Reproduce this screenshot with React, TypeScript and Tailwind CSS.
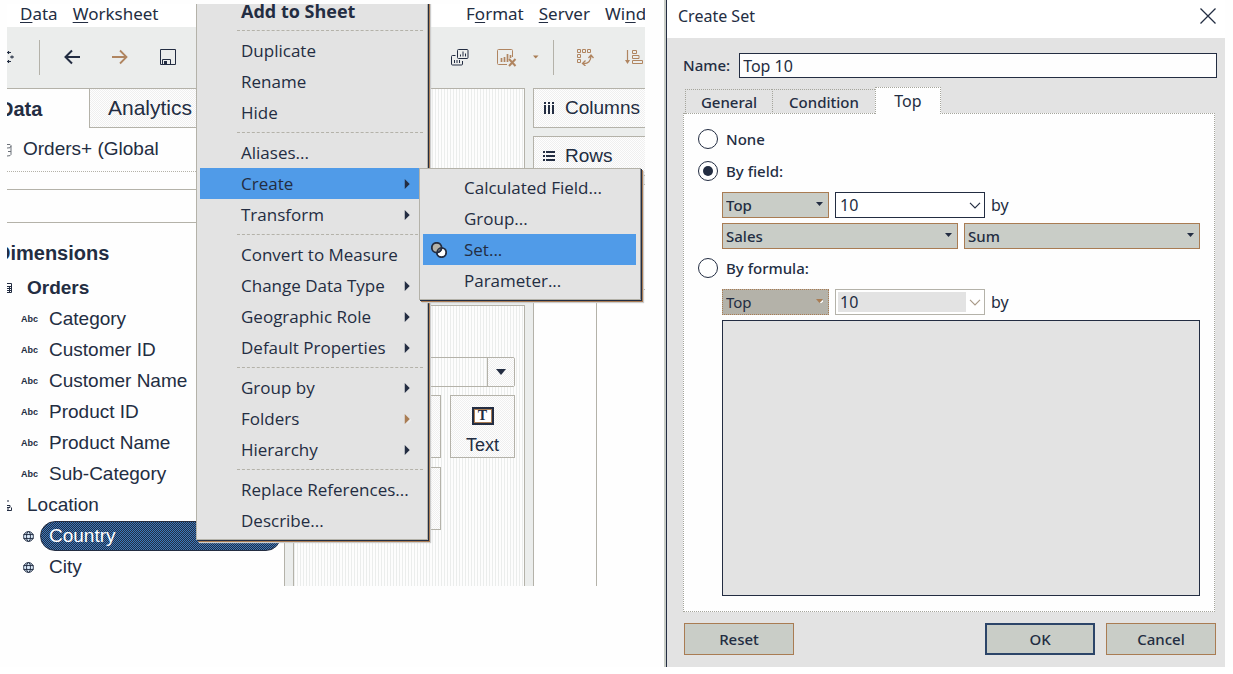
import React from "react";

const stripes =
  "bg-[repeating-linear-gradient(90deg,#ebedec_0_1px,#fdfdfd_1px_3px)]";
const checker =
  "bg-[repeating-conic-gradient(#efefef_0_25%,#fefefe_0_50%)] bg-[length:2px_2px]";

type Entry = { label: string; sub?: boolean; bold?: boolean; dim?: boolean; active?: boolean };

const menuGroups: Entry[][] = [
  [{ label: "Add to Sheet", bold: true }],
  [{ label: "Duplicate" }, { label: "Rename" }, { label: "Hide" }],
  [{ label: "Aliases..." }, { label: "Create", sub: true, active: true }, { label: "Transform", sub: true }],
  [
    { label: "Convert to Measure" },
    { label: "Change Data Type", sub: true },
    { label: "Geographic Role", sub: true },
    { label: "Default Properties", sub: true },
  ],
  [{ label: "Group by", sub: true }, { label: "Folders", sub: true, dim: true }, { label: "Hierarchy", sub: true }],
  [{ label: "Replace References..." }, { label: "Describe..." }],
];

const createItems: Entry[] = [
  { label: "Calculated Field..." },
  { label: "Group..." },
  { label: "Set...", active: true },
  { label: "Parameter..." },
];

const fields = ["Category", "Customer ID", "Customer Name", "Product ID", "Product Name", "Sub-Category"];

function SetIcon() {
  return (
    <svg className="h-4 w-4" viewBox="0 0 16 16" fill="none" stroke="#232d42" strokeWidth="1.8">
      <circle cx="10.5" cy="10.5" r="4.7" fill="#fff" />
      <circle cx="5.7" cy="5.7" r="4.9" fill="#b4b2a9" />
      <path d="M6 10.4a4.7 4.7 0 0 1 4.5-4.6a4.9 4.9 0 0 1-4.5 4.6z" fill="#6c6e72" strokeWidth="1.4" />
    </svg>
  );
}

function MenuRow({ item, children }: { item: Entry; children?: React.ReactNode }) {
  return (
    <li role="none" className="relative">
      <button
        type="button"
        role="menuitem"
        className={`flex h-[31px] w-full items-center justify-between pr-3 pl-[41px] text-left whitespace-nowrap ${
          item.active ? "bg-[#509be8]" : ""
        } ${item.bold ? "text-lg font-bold" : ""}`}
      >
        <span>{item.label}</span>
        {item.sub && (
          <svg className="h-[10px] w-[7px]" viewBox="0 0 6 9">
            {item.dim && <path d="M2 9.5L6 5.5V4.5L3 8z" fill="#fff" />}
            <path d="M0.5 0L5 4.5L0.5 9z" fill={item.dim ? "#a97c53" : "#232d42"} />
          </svg>
        )}
      </button>
      {children}
    </li>
  );
}

function CreateSubmenu() {
  return (
    <ul
      role="menu"
      aria-label="Create"
      className="absolute top-0 left-[219px] z-10 w-[222px] border border-[#b4b2a9] border-r-[#8d8d8d] bg-[#e3e3e3] py-[3px] pr-[4px] pl-[3px] shadow-[1px_1px_0_0_#232d42,2px_2px_0_0_#a97c53,3px_3px_1px_0_#cccccc]"
    >
      {createItems.map((item) => (
        <li role="none" key={item.label}>
          <button
            type="button"
            role="menuitem"
            className={`flex h-[31px] w-full items-center text-left whitespace-nowrap ${
              item.active ? "bg-[#509be8]" : ""
            }`}
          >
            <span className="flex w-[41px] pl-2">{item.active && <SetIcon />}</span>
            {item.label}
          </button>
        </li>
      ))}
    </ul>
  );
}

function ContextMenu() {
  return (
    <ul
      role="menu"
      aria-label="Field options"
      className="absolute -top-[10px] left-[189px] z-10 w-[232px] border border-[#b4b2a9] bg-[#e3e3e3] pr-1 pb-[3px] pl-[3px] font-['Open_Sans','Noto_Sans',sans-serif] text-[17px] shadow-[1px_1px_0_0_#232d42,2px_2px_0_0_#a97c53,3px_3px_1px_0_#cccccc]"
    >
      {menuGroups.map((group, g) => (
        <React.Fragment key={g}>
          {g > 0 && (
            <li role="separator" className="flex h-[9px] items-center pl-[37px]">
              <span className="w-full border-t border-dashed border-[#b4b2a9]" />
            </li>
          )}
          {group.map((item) => (
            <MenuRow key={item.label} item={item}>
              {item.active && <CreateSubmenu />}
            </MenuRow>
          ))}
        </React.Fragment>
      ))}
    </ul>
  );
}

function MenuWord({ before = "", mark, after }: { before?: string; mark: string; after: string }) {
  return (
    <button type="button" className="whitespace-nowrap">
      {before}
      <span className="underline decoration-1 underline-offset-2">{mark}</span>
      {after}
    </button>
  );
}

function MenuBar() {
  return (
    <nav className="flex h-[23px] items-start bg-white font-['Noto_Sans','Open_Sans',sans-serif] text-[17px] leading-5">
      <div className="flex w-[459px] shrink-0 gap-[15px] pl-[13px]">
        <MenuWord mark="D" after="ata" />
        <MenuWord mark="W" after="orksheet" />
      </div>
      <div className="flex shrink-0 gap-[15px]">
        <MenuWord before="F" mark="o" after="rmat" />
        <MenuWord mark="S" after="erver" />
        <MenuWord before="Wi" mark="n" after="dow" />
      </div>
    </nav>
  );
}

function Toolbar() {
  return (
    <div className="flex h-[61px] items-center bg-[#ebedec] pb-px">
      <div className="flex w-[444px] shrink-0 items-center">
        <svg className="h-4 w-[7px]" viewBox="0 0 7 16" stroke="#232d42" strokeWidth="1.2">
          <path d="M0 3.5h4M1.5 2v3M0 12.5h4M1.5 11v3M3 8h4M5 6.5v3" />
        </svg>
        <span className="ml-[25px] h-[35px] w-px bg-[#b4b2a9]" />
        <button type="button" aria-label="Undo" className="ml-6">
          <svg className="h-4 w-4" viewBox="0 0 16 16" fill="none" stroke="#232d42" strokeWidth="2">
            <path d="M16 8H1.500M8 1.500L1.500 8L8 14.500" />
          </svg>
        </button>
        <button type="button" aria-label="Redo" className="ml-8">
          <svg className="h-4 w-4" viewBox="0 0 16 16" fill="none" stroke="#b08560" strokeWidth="1.8">
            <path d="M0 8H14.500M8 1.500L14.500 8L8 14.500" />
          </svg>
        </button>
        <button type="button" aria-label="Save" className="ml-8">
          <svg className="h-4 w-4" viewBox="0 0 16 16" fill="none" stroke="#232d42">
            <path d="M0.5 0.5h15v15h-15zM2.500 15.500v-5h8v5" />
            <path d="M4 12h3v3.500h-3z" fill="#232d42" stroke="none" />
          </svg>
        </button>
      </div>
      <button type="button" aria-label="Duplicate sheet">
        <svg className="h-[17px] w-[18px]" viewBox="0 0 18 17" fill="none" stroke="#232d42">
          <path d="M6.500 1.500q0-1 1-1h8.500q1 0 1 1v7q0 1-1 1h-8.500q-1 0-1-1z" />
          <path d="M4.500 6.500h-3q-1 0-1 1v7.500q0 1 1 1h9q1 0 1-1v-3M9.500 7.500v-2M12 7.500v-5M14.500 7.500v-3M3.500 14v-3M6 14v-3M8.500 14v-3" />
        </svg>
      </button>
      <button type="button" aria-label="Clear sheet" className="ml-7">
        <svg className="h-5 w-5" viewBox="0 0 20 20" fill="none" stroke="#b08560">
          <path d="M10 17.500H1.500q-1 0-1-1V3.500q0-1 1-1h13q1 0 1 1V10" />
          <path d="M4.500 15v-4M7.500 15v-5M10.500 15v-8M13.500 11v-3" strokeWidth="1.700" />
          <path d="M12 12l6.500 7M18.500 12l-6.500 7" strokeWidth="2" />
        </svg>
      </button>
      <svg className="ml-4 h-1 w-[6px] shrink-0" viewBox="0 0 6 4">
        <path d="M0 0.500h5.500L2.700 3.500z" fill="#a97c53" />
      </svg>
      <span className="ml-[14px] h-[35px] w-px shrink-0 bg-[#b4b2a9]" />
      <button type="button" aria-label="Swap rows and columns" className="ml-[22px] shrink-0">
        <svg className="h-[18px] w-[18px]" viewBox="0 0 18 18" fill="none" stroke="#b08560">
          <path d="M1.500 1.500h3v3h-3zM6.500 1.500h3v3h-3zM11.500 1.500h3v3h-3zM1.500 6.500h3v3h-3zM1.500 11.500h3v3h-3z" />
          <path d="M7 15.500q8 .5 8-8M9.500 12.500l-3 3l3 2.500M12.500 10l2.500-3l2.500 3" strokeWidth="1.300" />
        </svg>
      </button>
      <button type="button" aria-label="Sort ascending" className="ml-[31px] shrink-0">
        <svg className="h-4 w-[18px]" viewBox="0 0 18 16" fill="none" stroke="#b08560">
          <path d="M2.500 1v12" strokeWidth="1.200" />
          <path d="M0 11h5l-2.500 4z" fill="#b08560" stroke="none" />
          <path d="M7.500 1.500h4v3h-4zM7.500 6.500h6.500v3h-6.500zM7.500 11.500h10v3h-10z" />
        </svg>
      </button>
    </div>
  );
}

function Globe() {
  return (
    <svg className="h-[11px] w-[11px]" viewBox="0 0 11 11" fill="none" stroke="#232d42">
      <circle cx="5.500" cy="5.500" r="4.900" fill="#d8e8f8" />
      <path d="M0.500 3.500h10M0.500 7.500h10" strokeWidth="0.900" />
      <ellipse cx="5.500" cy="5.500" rx="2" ry="4.900" />
    </svg>
  );
}

function DataPane() {
  return (
    <aside className="w-[278px] shrink-0 overflow-hidden border-r border-[#b4b2a9] bg-[#fefefe]">
      <div className="flex h-[40px] border-t border-[#b4b2a9] text-xl">
        <button type="button" className="-ml-2 w-[90px] shrink-0 text-left font-bold">
          Data
        </button>
        <button type="button" className={`flex-1 border-b border-l border-[#b4b2a9] pl-[18px] text-left text-[21px] ${checker}`}>
          Analytics
        </button>
      </div>
      <div className="flex h-[44px] items-center border-b border-dotted border-[#b4b2a9]">
        <svg className="h-[14px] w-4" viewBox="0 0 16 14" fill="none" stroke="#6b7078">
          <path d="M0 1.500q4-.5 4 1v9q0 1.500-4 1.500M0 5q4 .5 4-2M1 8.500h3" />
        </svg>
        Orders+ (Global
      </div>
      <div className="h-[18px] border-b border-[#b4b2a9]" />
      <div className="h-[33px] border-b border-[#b4b2a9]" />
      <h2 className="-ml-[11px] flex h-[60px] items-center text-[20px] font-bold">Dimensions</h2>
      <div className="-mt-[11px] flex h-[32px] items-center font-bold">
        <svg className="h-[10px] w-5" viewBox="0 0 20 10" fill="none" stroke="#232d42">
          <path d="M0 0.500h4.500v9H0M0 3.500h4M0 5.500h4M0 7.500h4M2.500 3v6" />
        </svg>
        Orders
      </div>
      <ul>
        {fields.map((f) => (
          <li key={f} className="flex h-[31px] items-center">
            <span className="w-[42px] pl-[14px] text-[9px] font-bold">Abc</span>
            {f}
          </li>
        ))}
      </ul>
      <div className="flex h-[31px] items-center">
        <svg className="h-3 w-5" viewBox="0 0 20 12" fill="none" stroke="#232d42">
          <path d="M0 1h2M0 5.500h3v2H0M0 10.500h4.500v-3M1 8v3" />
        </svg>
        Location
      </div>
      <div className="flex h-[31px] items-start pr-[3px] pl-4">
        <span className="flex h-[30px] items-center">
          <Globe />
        </span>
        <span className="ml-[6px] flex h-[30px] flex-1 items-center rounded-full border border-[#232d42] bg-[repeating-conic-gradient(#3a78bc_0_25%,#232d42_0_50%)] bg-[length:2px_2px] pl-2 text-white">
          Country
        </span>
      </div>
      <div className="flex h-[31px] items-center pl-4">
        <Globe />
        <span className="pl-[15px]">City</span>
      </div>
    </aside>
  );
}

function CardsPane() {
  return (
    <div className="flex w-[249px] shrink-0 flex-col bg-[#ebedec] pr-[9px] pl-2">
      <div className={`h-[208px] border border-[#b4b2a9] ${stripes}`} />
      <div className={`mt-[9px] flex-1 border border-b-0 border-[#b4b2a9] pt-[51px] pr-[9px] pl-2 ${stripes}`}>
        <div className={`flex h-[30px] justify-end rounded-xs border border-[#b4b2a9] ${stripes}`}>
          <button
            type="button"
            aria-label="Mark type"
            className={`flex w-[27px] items-center justify-center border-l border-[#b4b2a9] ${checker}`}
          >
            <svg className="h-[6px] w-[10px]" viewBox="0 0 10 6">
              <path d="M0 0h10L5 6z" fill="#232d42" />
            </svg>
          </button>
        </div>
        <div className="mt-2 grid grid-cols-3 gap-[9px]">
          <div className={`h-[63px] border border-[#b4b2a9] ${checker}`} />
          <div className={`h-[63px] border border-[#b4b2a9] ${checker}`} />
          <button
            type="button"
            className={`flex h-[63px] flex-col items-center justify-end gap-2 border border-[#b4b2a9] text-lg leading-6 ${checker}`}
          >
            <span className="flex h-[18px] w-[22px] items-center justify-center border-2 border-[#232d42] bg-white font-['Liberation_Serif',serif] text-sm leading-none font-bold ring-1 ring-[#a97c53] ring-inset">
              T
            </span>
            <span>Text</span>
          </button>
          <div className={`h-[63px] border border-[#b4b2a9] ${checker}`} />
          <div className={`h-[63px] border border-[#b4b2a9] ${checker}`} />
        </div>
      </div>
    </div>
  );
}

function Shelves() {
  return (
    <div className="-ml-px flex min-w-0 flex-1 flex-col bg-[#ebedec]">
      <div className={`flex h-[40px] items-center border border-r-0 border-[#b4b2a9] pl-[9px] ${checker}`}>
        <svg className="mr-[10px] h-3 w-3 shrink-0" viewBox="0 0 12 12" fill="#232d42">
          <path d="M1 0h2v2H1zM5 0h2v2H5zM9 0h2v2H9zM1 3h2v9H1zM5 3h2v9H5zM9 3h2v9H9z" />
        </svg>
        Columns
      </div>
      <div className={`mt-2 flex h-[40px] items-center border border-r-0 border-[#b4b2a9] pl-[9px] ${checker}`}>
        <svg className="mr-[10px] h-3 w-3 shrink-0" viewBox="0 0 12 12" fill="#232d42">
          <path d="M0 1h2v2H0zM0 5h2v2H0zM0 9h2v2H0zM3 1h9v2H3zM3 5h9v2H3zM3 9h9v2H3z" />
        </svg>
        Rows
      </div>
      <div className="mt-2 flex flex-1 flex-col border-t border-l border-[#b4b2a9] bg-[#fefefe]">
        <div className="h-[105px] border-b border-[#b4b2a9]" />
        <div className="w-[63px] flex-1 border-r border-[#b4b2a9]" />
      </div>
    </div>
  );
}

function Workspace() {
  return (
    <section
      aria-label="Workbook"
      className="relative mt-1 flex flex-col overflow-hidden font-['Liberation_Sans',Arial,sans-serif] text-[19px] whitespace-nowrap"
    >
      <MenuBar />
      <Toolbar />
      <div className="flex h-[498px]">
        <DataPane />
        <CardsPane />
        <Shelves />
      </div>
      <ContextMenu />
    </section>
  );
}

function DropButton({ label, value, disabled }: { label: string; value: string; disabled?: boolean }) {
  return (
    <div className="relative">
      <select
        aria-label={label}
        disabled={disabled}
        defaultValue={value}
        className="block h-[26px] w-full appearance-none border border-[#a97c53] bg-[#c9cdc7] px-[3px] text-[#232d42] opacity-100 disabled:border-dotted disabled:bg-[#b4b2a9] disabled:font-normal"
      >
        <option>{value}</option>
      </select>
      <svg className="pointer-events-none absolute top-[10px] right-[6px] h-1 w-[7px]" viewBox="0 0 7 4">
        {disabled && <path d="M3.500 4L7 1v1.500L4.500 5z" fill="#fff" />}
        <path d="M0 0h7L3.500 4z" fill={disabled ? "#a97c53" : "#232d42"} />
      </svg>
    </div>
  );
}

function Combo({ label, disabled }: { label: string; disabled?: boolean }) {
  return (
    <div
      className={`relative flex h-[26px] w-[150px] border bg-white p-0.5 ${
        disabled ? "border-[#b4b2a9]" : "border-[#232d42]"
      }`}
    >
      <input
        aria-label={label}
        defaultValue="10"
        disabled={disabled}
        className="mr-4 min-w-0 flex-1 bg-white px-0.5 text-base leading-none font-normal disabled:bg-[#e3e3e3]"
      />
      <svg
        className="pointer-events-none absolute top-[9px] right-[3px] h-[7px] w-3"
        viewBox="0 0 12 7"
        fill="none"
        stroke={disabled ? "#a99a88" : "#232d42"}
        strokeWidth="1.200"
      >
        <path d="M1 0.800L6 5.800L11 0.800" />
      </svg>
    </div>
  );
}

function Radio({ label, checked }: { label: string; checked?: boolean }) {
  return (
    <label className="flex h-6 items-center gap-2">
      <input
        type="radio"
        name="mode"
        defaultChecked={checked}
        className="grid h-[20px] w-[20px] appearance-none place-items-center rounded-full border border-[#232d42] bg-white before:h-[10px] before:w-[10px] before:rounded-full checked:before:bg-[#232d42]"
      />
      {label}
    </label>
  );
}

function CreateSetDialog() {
  const tab = "border border-b-0 border-dotted border-[#a5a59c]";
  const btn = "h-8 w-[110px] bg-[#c9cdc7]";
  return (
    <section
      role="dialog"
      aria-label="Create Set"
      className="flex border-l-2 border-[#c9cdc7] font-['Noto_Sans','Open_Sans',sans-serif] text-[15px] font-medium"
    >
      <div className="flex min-w-0 flex-1 flex-col border-l border-[#232d42] bg-[#e3e3e3]">
        <header className="flex h-[38px] items-center justify-between bg-white pt-0.5 pr-[9px] pb-2 pl-[11px] text-base font-normal">
          <h1>Create Set</h1>
          <button type="button" aria-label="Close">
            <svg className="h-4 w-4" viewBox="0 0 16 16" stroke="#232d42" strokeWidth="1.300">
              <path d="M0.500 0.500L15.500 15.500M15.500 0.500L0.500 15.500" />
            </svg>
          </button>
        </header>
        <div className="flex h-[49px] items-center gap-[9px] pt-2 pr-2 pb-0.5 pl-4">
          <label htmlFor="set-name">Name:</label>
          <input
            id="set-name"
            defaultValue="Top 10"
            className="h-[25px] min-w-0 flex-1 border border-[#232d42] bg-[#fefefe] px-[3px] text-base font-normal"
          />
        </div>
        <div role="tablist" className="relative z-1 -mb-px flex h-[27px] items-end pl-[18px]">
          <button type="button" role="tab" className={`h-[25px] w-[87px] ${tab} border-r-0`}>
            General
          </button>
          <button type="button" role="tab" className={`h-[25px] w-[103px] ${tab} border-r-0`}>
            Condition
          </button>
          <button type="button" role="tab" aria-selected="true" className={`h-[27px] w-[66px] bg-[#fefefe] text-base font-normal ${tab}`}>
            Top
          </button>
        </div>
        <div
          role="tabpanel"
          className="mr-[10px] ml-4 flex flex-col border border-dotted border-[#a5a59c] bg-[#fefefe] px-[14px] pt-[13px] pb-[15px]"
        >
          <Radio label="None" />
          <div className="mt-2">
            <Radio label="By field:" checked />
          </div>
          <div className="mt-[9px] ml-6 flex items-center gap-[6px]">
            <div className="w-[107px]">
              <DropButton label="Direction" value="Top" />
            </div>
            <Combo label="Count" />
            <span className="text-base font-normal">by</span>
          </div>
          <div className="mt-[5px] ml-6 grid grid-cols-2 gap-[6px]">
            <DropButton label="Field" value="Sales" />
            <DropButton label="Aggregation" value="Sum" />
          </div>
          <div className="mt-[7px]">
            <Radio label="By formula:" />
          </div>
          <div className="mt-[9px] ml-6 flex items-center gap-[6px]">
            <div className="w-[107px]">
              <DropButton label="Formula direction" value="Top" disabled />
            </div>
            <Combo label="Formula count" disabled />
            <span className="text-base font-normal">by</span>
          </div>
          <textarea
            aria-label="Formula"
            disabled
            className="mt-[5px] ml-6 h-[276px] resize-none border border-[#232d42] bg-[#e3e3e3]"
          />
        </div>
        <footer className="flex items-center gap-[11px] pt-[11px] pr-[9px] pb-3 pl-[17px]">
          <button type="button" className={`mr-auto border border-[#a97c53] ${btn}`}>
            Reset
          </button>
          <button type="button" className={`border-2 border-[#2c4569] ${btn}`}>
            OK
          </button>
          <button type="button" className={`border border-[#a97c53] ${btn}`}>
            Cancel
          </button>
        </footer>
      </div>
    </section>
  );
}

export default function App() {
  return (
    <main className="grid grid-cols-[638fr_561fr] items-start gap-[19px] bg-[#fefefe] pr-2 pl-[7px] text-[#232d42]">
      <Workspace />
      <CreateSetDialog />
    </main>
  );
}
